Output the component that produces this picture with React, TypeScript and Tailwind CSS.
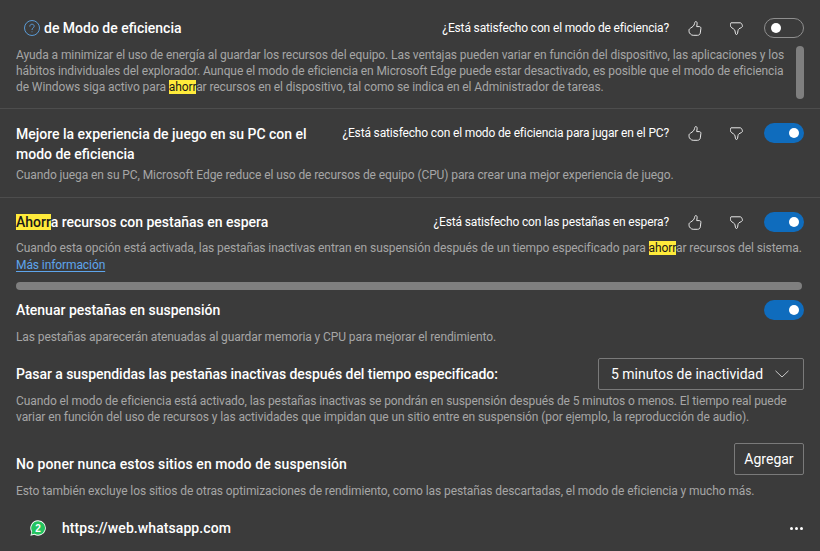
import type { ReactNode } from "react";

const font = "font-['Roboto','Liberation_Sans',sans-serif]";

function Mark({ children }: { children: ReactNode }) {
  return <span className="bg-[#ffeb3b] text-[#1a1a1a]">{children}</span>;
}

function ThumbUp() {
  return (
    <svg width="14" height="15" viewBox="0 0 14 15" fill="none" stroke="#e8e8e8" strokeWidth="1" strokeLinejoin="round" className="shrink-0">
      <path d="M1 9.200c0-1 .8-1.600 1.600-2.100L5 5.400c.8-.7 1.300-1.800 1.600-3 .2-1 .5-1.900 1.200-1.900 1 0 1.500 1.200 1.300 2.400L8.700 5.600h2.600c1 0 1.700.8 1.600 1.700l-.6 4.600c-.2 1.400-1.200 2.400-2.800 2.400H5.200c-1.200 0-2-.5-2.800-1.300L1.400 11.800C1.100 11.200 1 10.400 1 9.200z" />
    </svg>
  );
}

function ThumbDown() {
  return (
    <svg width="13" height="13" viewBox="0 0 13 13" fill="none" stroke="#e8e8e8" strokeWidth="1" strokeLinejoin="round" className="shrink-0">
      <path d="M1 .8h9c1 0 1.800.8 2 1.700l.4 1.200c.2 1-.4 1.600-1.300 2L9 6.800c-.6.400-.9 1-1 1.800l-.4 2.600c-.2.800-.6 1.300-1.100 1.300-.6 0-1-.5-1.100-1.300L5 8.900c-.2-.9-.7-1.500-1.500-2L1.800 5.800C.9 5.200.5 4.500.5 3.600c0-1.500 0-2.800.5-2.800z" />
    </svg>
  );
}

function Toggle({ on = true }: { on?: boolean }) {
  return on ? (
    <div className="w-10 h-5 rounded-full bg-[#0f6cbd] flex items-center justify-end pr-[5px] shrink-0">
      <div className="w-[10px] h-[10px] rounded-full bg-white" />
    </div>
  ) : (
    <div className="w-10 h-5 rounded-full border border-[#8f8f8f] flex items-center pl-[6px] shrink-0">
      <div className="w-[10px] h-[10px] rounded-full bg-white" />
    </div>
  );
}

function Feedback({ question, on }: { question: string; on?: boolean }) {
  return (
    <div className="flex items-center shrink-0">
      <span className="text-[12px] tracking-[-0.15px] text-white whitespace-nowrap">{question}</span>
      <span className="ml-[19px] w-[14px] flex justify-center"><ThumbUp /></span>
      <span className="ml-[28px] w-[13px] flex justify-center"><ThumbDown /></span>
      <span className="ml-[21px]"><Toggle on={on} /></span>
    </div>
  );
}

export default function App() {
  return (
    <div className={`w-[820px] h-[551px] overflow-hidden bg-[#3b3b3b] text-[12px] tracking-[-0.09px] leading-4 text-[#a6a6a6] ${font}`}>
      {/* modo de eficiencia */}
      <section className="h-[109px] border-b border-[#4d4d4d] pl-4 pr-4 pt-4">
        <div className="flex items-center justify-between h-6">
          <div className="flex items-center pl-2 gap-[4px]">
            <svg width="16" height="16" viewBox="0 0 16 16" fill="none" stroke="#5b9bd5" strokeWidth="1">
              <circle cx="8" cy="8" r="7.500" />
              <path d="M5.800 6.200c0-1.200 1-2 2.200-2s2.200.8 2.200 2c0 1.700-2.200 1.700-2.200 3.400" strokeLinecap="round" />
              <circle cx="8" cy="11.800" r=".5" fill="#5b9bd5" stroke="none" />
            </svg>
            <span className="text-[14px] tracking-normal font-medium text-white">de Modo de eficiencia</span>
          </div>
          <Feedback question="¿Está satisfecho con el modo de eficiencia?" on={false} />
        </div>
        <div className="flex mt-[6px]">
          <p className="w-[780px] mt-[1px] whitespace-nowrap">
            Ayuda a minimizar el uso de energía al guardar los recursos del equipo. Las ventajas pueden variar en función del dispositivo, las aplicaciones y los<br />
            hábitos individuales del explorador. Aunque el modo de eficiencia en Microsoft Edge puede estar desactivado, es posible que el modo de eficiencia<br />
            de Windows siga activo para <Mark>ahorr</Mark>ar recursos en el dispositivo, tal como se indica en el Administrador de tareas.
          </p>
          <div className="w-2 h-[53px] rounded-full bg-[#7f7f7f] shrink-0" />
        </div>
      </section>

      {/* juego */}
      <section className="h-[89px] border-b border-[#4d4d4d] px-4 pt-[15px]">
        <div className="flex items-start justify-between">
          <h2 className="w-[320px] text-[14px] tracking-normal leading-5 font-medium text-white">
            Mejore la experiencia de juego en su PC con el modo de eficiencia
          </h2>
          <div className="-mt-[1px]">
            <Feedback question="¿Está satisfecho con el modo de eficiencia para jugar en el PC?" />
          </div>
        </div>
        <p className="mt-[3px] whitespace-nowrap">
          Cuando juega en su PC, Microsoft Edge reduce el uso de recursos de equipo (CPU) para crear una mejor experiencia de juego.
        </p>
      </section>

      {/* pestañas en espera */}
      <section className="px-4 pt-[14px]">
        <div className="flex items-center justify-between h-5">
          <h2 className="text-[14px] tracking-normal font-medium text-white"><Mark>Ahorr</Mark>a recursos con pestañas en espera</h2>
          <Feedback question="¿Está satisfecho con las pestañas en espera?" />
        </div>
        <p className="mt-[8px] whitespace-nowrap">
          Cuando esta opción está activada, las pestañas inactivas entran en suspensión después de un tiempo especificado para <Mark>ahorr</Mark>ar recursos del sistema.
        </p>
        <a className="block mt-[1px] w-fit text-[#5ea5ec] underline underline-offset-2">Más información</a>
        <div className="h-2 w-[786px] rounded-full bg-[#7f7f7f] mt-[9px]" />
      </section>

      {/* atenuar */}
      <section className="px-4 pt-[10px]">
        <div className="flex items-center justify-between h-5">
          <h2 className="text-[14px] tracking-normal font-medium text-white">Atenuar pestañas en suspensión</h2>
          <Toggle />
        </div>
        <p className="mt-[9px]">Las pestañas aparecerán atenuadas al guardar memoria y CPU para mejorar el rendimiento.</p>
      </section>

      {/* suspendidas */}
      <section className="px-4 pt-[13px]">
        <div className="flex items-center justify-between h-8">
          <h2 className="text-[14px] font-medium tracking-[-0.05px] text-white">Pasar a suspendidas las pestañas inactivas después del tiempo especificado:</h2>
          <div className="w-[206px] h-8 border border-[#7a7a7a] rounded-[2px] flex items-center justify-between pl-3 pr-[14px] text-[14px] tracking-normal text-white">
            <span>5 minutos de inactividad</span>
            <svg width="14" height="8" viewBox="0 0 14 8" fill="none" stroke="#c8c8c8" strokeWidth="1"><path d="M.5.8 7 7l6.500-6.200" /></svg>
          </div>
        </div>
        <p className="mt-[3px] whitespace-nowrap">
          Cuando el modo de eficiencia está activado, las pestañas inactivas se pondrán en suspensión después de 5 minutos o menos. El tiempo real puede<br />
          variar en función del uso de recursos y las actividades que impidan que un sitio entre en suspensión (por ejemplo, la reproducción de audio).
        </p>
      </section>

      {/* no poner nunca */}
      <section className="px-4 pt-[18px]">
        <div className="flex items-start justify-between h-8">
          <h2 className="mt-[11px] text-[14px] leading-5 font-medium tracking-[0.08px] text-white">No poner nunca estos sitios en modo de suspensión</h2>
          <button className="w-[70px] h-8 border border-[#7a7a7a] rounded-[2px] text-[14px] tracking-normal text-white">Agregar</button>
        </div>
        <p className="mt-[8px] whitespace-nowrap">
          Esto también excluye los sitios de otras optimizaciones de rendimiento, como las pestañas descartadas, el modo de eficiencia y mucho más.
        </p>
        <div className="flex items-center justify-between mt-[21px] pl-[14px] pr-[1px]">
          <div className="flex items-center gap-4">
            <svg width="16" height="16" viewBox="0 0 16 16">
              <path d="M8 .3a7.700 7.700 0 0 0-6.600 11.600L.4 15.700l3.900-1A7.700 7.700 0 1 0 8 .3z" fill="#fff" />
              <path d="M8 1.200a6.800 6.800 0 0 0-5.800 10.300l-.7 3 3-.8A6.800 6.800 0 1 0 8 1.200z" fill="#25c35f" />
              <text x="8" y="11.500" textAnchor="middle" fontSize="10" fontWeight="700" fill="#fff" fontFamily="Liberation Sans, sans-serif">2</text>
            </svg>
            <span className="text-[14px] font-medium tracking-[0.08px] text-white">https://web.whatsapp.com</span>
          </div>
          <div className="flex gap-[2px]">
            <span className="w-[3px] h-[3px] rounded-full bg-white" />
            <span className="w-[3px] h-[3px] rounded-full bg-white" />
            <span className="w-[3px] h-[3px] rounded-full bg-white" />
          </div>
        </div>
      </section>
    </div>
  );
}
